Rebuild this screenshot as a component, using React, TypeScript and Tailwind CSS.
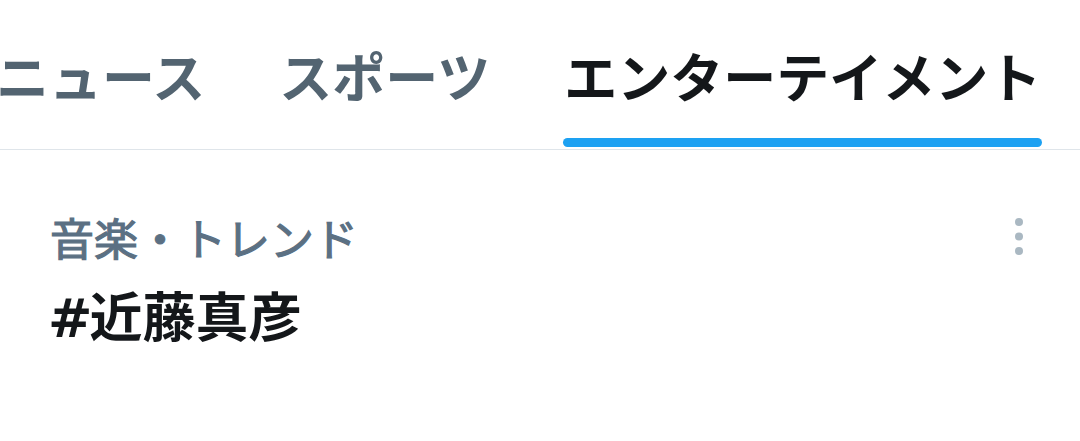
import type { ReactNode } from 'react';

const tabs = [
  { label: 'ニュース', active: false },
  { label: 'スポーツ', active: false },
  { label: 'エンターテイメント', active: true },
];

function Tab({ label, active }: { label: string; active: boolean }) {
  return (
    <div className="flex shrink-0 flex-col px-[37px] pt-[49px] pb-[2px]">
      <span
        className={
          'whitespace-nowrap text-[53px] font-bold leading-[62px] ' +
          (active ? 'text-[#14171a]' : 'text-[#536471]')
        }
      >
        {label}
      </span>
      <div className={'mx-[-1px] mt-[27px] h-[9px] rounded-full ' + (active ? 'bg-[#1da1f2]' : 'bg-transparent')} />
    </div>
  );
}

function MoreIcon() {
  return (
    <svg width="12" height="40" viewBox="0 0 12 40" className="text-[#aab8c2]">
      <circle cx="6" cy="6" r="4" fill="currentColor" />
      <circle cx="6" cy="20.5" r="4" fill="currentColor" />
      <circle cx="6" cy="35" r="4" fill="currentColor" />
    </svg>
  );
}

function Trend({ meta, children }: { meta: string; children: ReactNode }) {
  return (
    <div className="flex items-start justify-between pl-[50px] pr-[55px] pt-[62px]">
      <div className="flex flex-col gap-[18px]">
        <span className="text-[44px] font-normal leading-[58px] text-[#5b7083] [-webkit-text-stroke:1.2px_#5b7083]">
          {meta}
        </span>
        <span className="text-[53px] font-bold leading-[62px] text-[#14171a]">{children}</span>
      </div>
      <div className="pt-[4px]">
        <MoreIcon />
      </div>
    </div>
  );
}

export default function App() {
  return (
    <div
      className="h-[441px] w-[1080px] overflow-hidden bg-white"
      style={{ fontFamily: 'Roboto, "Noto Sans CJK JP", sans-serif' }}
    >
      <nav className="overflow-hidden border-b border-[#dfe5ea]">
        <div className="ml-[-41px] flex">
          {tabs.map((t) => (
            <Tab key={t.label} label={t.label} active={t.active} />
          ))}
        </div>
      </nav>
      <Trend meta="音楽・トレンド">
        <span className="ml-[-2px] mr-[-3px] font-['DejaVu_Sans',sans-serif]">#</span>近藤真彦
      </Trend>
    </div>
  );
}
